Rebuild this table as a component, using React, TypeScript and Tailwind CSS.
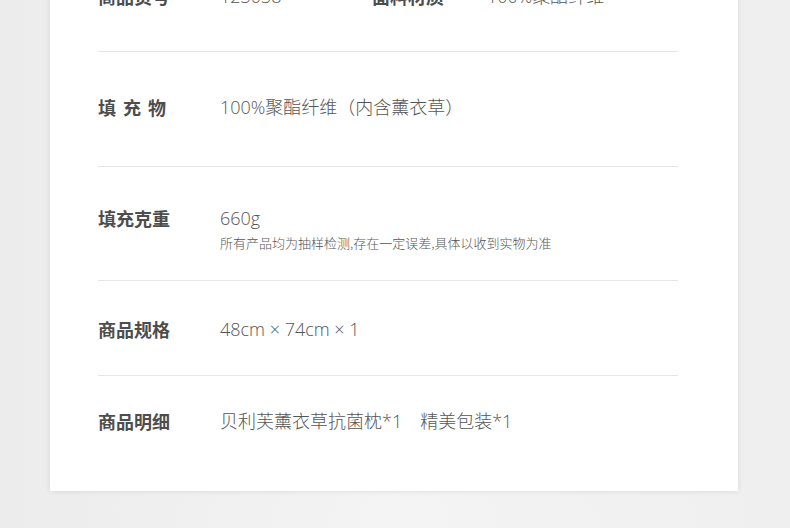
const font = { fontFamily: '"Noto Sans CJK SC", "Noto Sans", sans-serif' };
const valueFont = { fontFamily: '"Open Sans", "Noto Sans CJK SC", sans-serif' };

interface Row {
  label: string;
  value: string;
  note?: string;
  spaced?: boolean;
  h: string;
  pt: string;
  last?: boolean;
}

const rows: Row[] = [
  { label: "填充物", value: "100%聚酯纤维（内含薰衣草）", spaced: true, h: "h-[115px]", pt: "pt-[43px]" },
  {
    label: "填充克重",
    value: "660g",
    note: "所有产品均为抽样检测,存在一定误差,具体以收到实物为准",
    h: "h-[114px]",
    pt: "pt-[39px]",
  },
  { label: "商品规格", value: "48cm × 74cm × 1", h: "h-[95px]", pt: "pt-[36px]" },
  { label: "商品明细", value: "贝利芙薰衣草抗菌枕*1\u3000精美包装*1", h: "h-[115px]", pt: "pt-[33px]", last: true },
];

function Label({ text, spaced }: { text: string; spaced?: boolean }) {
  return (
    <div
      className={`w-[122px] shrink-0 text-[18px] leading-[24px] font-bold text-[#4d4d4d] ${
        spaced ? "tracking-[7px]" : ""
      }`}
    >
      {text}
    </div>
  );
}

function Value({ text, className = "" }: { text: string; className?: string }) {
  return (
    <div className={`text-[18px] leading-[24px] font-light text-[#555] ${className}`} style={valueFont}>
      {text}
    </div>
  );
}

export default function App() {
  return (
    <div
      className="h-[528px] w-[790px] overflow-hidden bg-gradient-to-r from-[#ececec] via-[#f4f4f4] to-[#efefef]"
      style={font}
    >
      <div className="ml-[50px] -mt-[40px] w-[688px] bg-white pl-[48px] shadow-[0_0_6px_rgba(0,0,0,0.10)]">
        {/* first row, cut off by the top of the page */}
        <div className="flex h-[92px] w-[580px] border-b border-[#e6e6e6] pt-[24px]">
          <Label text="商品货号" />
          <Value text="123038" className="w-[152px]" />
          <div className="w-[115px] text-[18px] leading-[24px] font-bold text-[#4d4d4d]">面料材质</div>
          <Value text="100%聚酯纤维" />
        </div>
        {rows.map((r) => (
          <div
            key={r.label}
            className={`flex w-[580px] ${r.h} ${r.pt} ${r.last ? "" : "border-b border-[#e6e6e6]"}`}
          >
            <Label text={r.label} spaced={r.spaced} />
            <div className="flex flex-col">
              <Value text={r.value} />
              {r.note && (
                <div className="mt-[4px] text-[13px] leading-[18px] font-light text-[#555]">{r.note}</div>
              )}
            </div>
          </div>
        ))}
      </div>
    </div>
  );
}
